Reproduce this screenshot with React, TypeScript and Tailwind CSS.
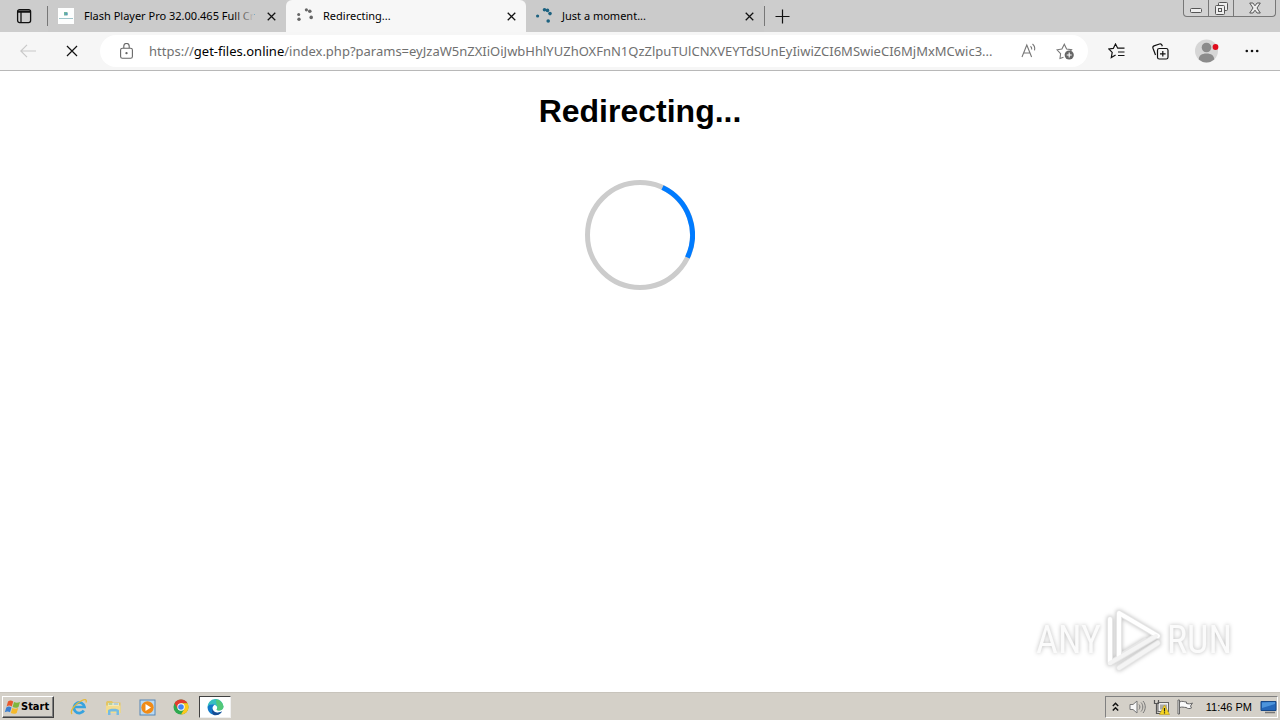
import type { ReactNode } from "react";
import clsx from "clsx";

const URL_REST = "/index.php?params=eyJzaW5nZXIiOiJwbHhlYUZhOXFnN1QzZlpuTUlCNXVEYTdSUnEyIiwiZCI6MSwieCI6MjMxMCwic3...";

function CloseIcon({ size = 9, stroke = 1.4 }: { size?: number; stroke?: number }) {
    return (
        <svg width={size} height={size} viewBox="0 0 10 10" fill="none" stroke="#111" strokeWidth={stroke}>
            <path d="M.8.8 9.2 9.2M9.2.8.8 9.2" />
        </svg>
    );
}

function LoadingDots({ color }: { color: string }) {
    return (
        <svg width="16" height="16" viewBox="0 0 16 16" fill={color}>
            <circle cx="1.6" cy="8" r="1.6" />
            <circle cx="8.5" cy="1.8" r="1.8" />
            <circle cx="11.5" cy="2.4" r="1.8" />
            <circle cx="14" cy="5.6" r="1.8" />
            <circle cx="12.2" cy="13" r="1.8" />
        </svg>
    );
}

function GreyDots() {
    return (
        <svg width="16" height="16" viewBox="0 0 16 16" fill="#666">
            <circle cx="1.7" cy="6.4" r="1.5" />
            <circle cx="2" cy="11.2" r="1.7" />
            <circle cx="9.4" cy="1.8" r="1.6" />
            <circle cx="12.8" cy="3.2" r="1.8" />
            <circle cx="14.2" cy="9.4" r="1.8" />
        </svg>
    );
}

function SiteIcon() {
    return (
        <svg width="16" height="16" viewBox="0 0 16 16">
            <path d="M0 0h16v16H0z" fill="#fdfefe" />
            <path d="M6 4h3.500v3.500H6z" fill="#6fb7a0" />
            <path d="M7.500 5h2v2h-2z" fill="#5a9bbd" />
            <path d="M1 10h14v1H1z" fill="#9fc5cb" />
        </svg>
    );
}

type TabProps = { title: string; icon: ReactNode; active?: boolean; fade?: boolean; className: string };

function Tab({ title, icon, active, fade, className }: TabProps) {
    return (
        <div className={clsx("flex h-8 items-center pr-2.5", active ? "rounded-t-md bg-[#f7f7f7]" : "bg-[#cbcbcb]", className)}>
            <button type="button" role="tab" aria-selected={!!active} className="flex min-w-0 flex-1 items-center gap-2.5">
                <span className="shrink-0">{icon}</span>
                <span className="relative text-left text-[11px] leading-4 whitespace-nowrap">
                    {title}
                    {fade && <span className="absolute inset-y-0 right-0 w-5 bg-linear-to-r from-transparent to-[#cbcbcb]" />}
                </span>
            </button>
            <button type="button" aria-label={`Close ${title}`} className="ml-2 shrink-0">
                <CloseIcon />
            </button>
        </div>
    );
}

function WindowControls() {
    return (
        <div className="flex h-[17px] self-start rounded-b-[4px] border border-t-0 border-[#777] bg-[#d2d2d2]">
            <button type="button" aria-label="Minimize" className="flex w-[25px] items-center justify-center border-r border-[#777]">
                <svg width="12" height="12" viewBox="0 0 12 12" fill="#eee" stroke="#555">
                    <rect x=".5" y="6.500" width="11" height="4" rx="1" />
                </svg>
            </button>
            <button type="button" aria-label="Restore" className="flex w-[25px] items-center justify-center border-r border-[#777]">
                <svg width="13" height="13" viewBox="0 0 13 13" fill="#eee" stroke="#555">
                    <rect x="3.500" y=".5" width="9" height="8" rx="1" />
                    <rect x=".5" y="3.500" width="9" height="9" rx="1" />
                    <rect x="3.500" y="6.500" width="3" height="3" />
                </svg>
            </button>
            <button type="button" aria-label="Close window" className="flex w-[41px] items-center justify-center">
                <svg width="12" height="12" viewBox="0 0 12 12" fill="#eee" stroke="#555">
                    <path d="M.7 1h3.200L6 3.800 8.100 1h3.200L8 6l3.300 5H8.100L6 8.200 3.900 11H.7L4 6z" />
                </svg>
            </button>
        </div>
    );
}

function TabStrip() {
    return (
        <header className="flex h-8 items-center bg-[#cdcdcd]">
            <button type="button" aria-label="Tab actions" className="ml-4 flex w-[31px] items-center">
                <svg width="16" height="16" viewBox="0 0 16 16" fill="none" stroke="#111" strokeWidth="1.300">
                    <rect x="1.600" y="1.600" width="13" height="13" rx="2" />
                    <path d="M1.600 3.200h13M1.600 4.200h13M5 4v10.500" />
                </svg>
            </button>
            <span className="h-5 w-px bg-[#777]" />
            <div role="tablist" className="flex min-w-0">
                <Tab title="Flash Player Pro 32.00.465 Full Cr" icon={<SiteIcon />} fade className="w-[238px] pl-2.5" />
                <Tab title="Redirecting..." icon={<GreyDots />} active className="w-60 pl-[11px]" />
                <Tab title="Just a moment..." icon={<LoadingDots color="#1d6280" />} className="w-[238px] pl-2.5" />
            </div>
            <span className="h-5 w-px bg-[#777]" />
            <button type="button" aria-label="New tab" className="ml-2.5">
                <svg width="15" height="15" viewBox="0 0 15 15" stroke="#111" strokeWidth="1.200">
                    <path d="M7.500.5v14M.5 7.500h14" />
                </svg>
            </button>
            <div className="mr-1 ml-auto self-start">
                <WindowControls />
            </div>
        </header>
    );
}

function Toolbar() {
    return (
        <nav className="flex h-[39px] items-center border-b border-[#b8b8b8] bg-[#f6f6f6]">
            <button type="button" aria-label="Back" disabled className="ml-5">
                <svg width="16" height="14" viewBox="0 0 16 14" fill="none" stroke="#c8c8c8" strokeWidth="1.200">
                    <path d="M7 .8.8 7 7 13.200M.8 7H16" />
                </svg>
            </button>
            <button type="button" aria-label="Stop loading" className="ml-[30px]">
                <CloseIcon size={12} stroke={1} />
            </button>
            <div className="ml-[22px] flex h-8 min-w-0 flex-1 items-center rounded-full bg-white pr-3.5 pl-5">
                <svg width="13" height="16" viewBox="0 0 13 16" fill="none" stroke="#666" strokeWidth="1.100" className="shrink-0">
                    <rect x=".6" y="5.200" width="11.800" height="10" rx="1.800" />
                    <path d="M3.800 5V3.200a2.700 2.700 0 0 1 5.400 0V5" />
                    <circle cx="6.500" cy="10.200" r=".6" fill="#666" />
                </svg>
                <p className="ml-4 min-w-0 flex-1 overflow-hidden text-[13px] leading-5 whitespace-nowrap text-[#707070]">
                    https://<span className="text-black">get-files.online</span>{URL_REST}
                </p>
                <button type="button" aria-label="Read aloud" className="shrink-0">
                    <svg width="17" height="16" viewBox="0 0 17 16" fill="none" stroke="#777" strokeWidth="1.100">
                        <path d="m1 14 4.800-12L10.600 14M2.600 10h6.400" />
                        <path d="M9.500 3.200c1 .8 1.400 2 1.200 3.300M11.500 1c2 1.600 2.600 3.800 2 6.400" />
                    </svg>
                </button>
                <button type="button" aria-label="Add to favorites" className="ml-[18px] shrink-0">
                    <svg width="18" height="18" viewBox="0 0 18 18" fill="none" stroke="#777" strokeWidth="1.100">
                        <path d="M7.500 15.200 4 16.500l.6-4.800L1 7.800l4.900-.8L8.300 2.300 10.600 7l5 .6-1.300 1.500" />
                        <circle cx="13.200" cy="13" r="4.600" fill="#666" stroke="none" />
                        <path d="M10.700 13h5M13.200 10.500v5" stroke="#fff" />
                    </svg>
                </button>
            </div>
            <button type="button" aria-label="Favorites" className="ml-5">
                <svg width="17" height="16" viewBox="0 0 17 16" fill="none" stroke="#111" strokeWidth="1.200">
                    <path d="M16.500 5.200H9.700L7.500 1 5.300 5.400.8 6l3.400 3.400-.9 5.100L7.600 12M10 9h6.500M10 12.500h6.500" />
                </svg>
            </button>
            <button type="button" aria-label="Collections" className="ml-[27px]">
                <svg width="17" height="17" viewBox="0 0 17 17" fill="none" stroke="#111" strokeWidth="1.200">
                    <path d="M3.500 12 1 5.200C.6 4 1 3.300 2 2.900L7.500 1c1.200-.4 2 0 2.400 1l.4 1.200" />
                    <rect x="5.500" y="5.500" width="10.500" height="10.500" rx="1.800" />
                    <path d="M8 10.800h5.600M10.800 8v5.600" />
                </svg>
            </button>
            <button type="button" aria-label="Profile" className="ml-[26px]">
                <svg width="24" height="24" viewBox="0 0 24 24">
                    <circle cx="11.500" cy="12" r="11.500" fill="#d6d6d6" />
                    <circle cx="11.500" cy="8.500" r="4.800" fill="#8b8b8b" />
                    <path d="M3.800 20.500c0-4 3-6 7.700-6s7.700 2 7.700 6a11.500 11.500 0 0 1-15.400 0z" fill="#8b8b8b" />
                    <circle cx="20.500" cy="8" r="2.900" fill="#e00b1c" />
                </svg>
            </button>
            <button type="button" aria-label="Settings and more" className="mr-[21px] ml-[26px]">
                <svg width="14" height="4" viewBox="0 0 14 4" fill="#111">
                    <circle cx="1.800" cy="2" r="1.300" />
                    <circle cx="7" cy="2" r="1.300" />
                    <circle cx="12.200" cy="2" r="1.300" />
                </svg>
            </button>
        </nav>
    );
}

function Watermark() {
    return (
        <div className="absolute right-12 bottom-5 flex items-center gap-1 font-['Roboto_Condensed','Open_Sans_Condensed',Roboto,sans-serif] text-[38px] leading-none text-[#fbfbfb] drop-shadow-[0_0_2px_#bbb]">
            <span>ANY</span>
            <svg width="58" height="64" viewBox="0 0 58 64" fill="none" strokeLinejoin="round" strokeLinecap="round">
                <path d="M14 5v44M14 5l39 23M5 11v44l7-4 39-23M14 60l39-25M14 49l26-16" stroke="#e6e6e6" strokeWidth="6" />
                <path d="M14 49V5l39 23M5 55V11" stroke="#fff" strokeWidth="4" />
                <path d="M5 55l7-4 39-23M14 60l39-25" stroke="#f4f4f4" strokeWidth="4" />
            </svg>
            <span>RUN</span>
        </div>
    );
}

function WindowsFlag() {
    return (
        <svg width="17" height="17" viewBox="0 0 17 17">
            <path d="M4 2.500c2-1.400 3.500-1 5.200 0L7.800 7.400C6 6.400 4.500 6.300 2.600 7.400z" fill="#e8582b" />
            <path d="M10 3c2 1 3.600 1 6 0l-1.500 5c-2 1.200-4 1-5.900 0z" fill="#7fb63c" />
            <path d="M2.300 8.400c1.900-1.200 3.500-1 5.200 0L6 13.300c-1.600-1-3.300-1-5.200 0z" fill="#3b7fd0" />
            <path d="M8.300 9c2 1 3.700 1.100 5.900 0l-1.500 4.900c-2 1.200-3.800 1-5.900 0z" fill="#f5b92b" />
        </svg>
    );
}

function ExplorerE() {
    return (
        <svg width="18" height="18" viewBox="0 0 18 18" fill="none">
            <path d="M13.800 12.500A5.300 5.300 0 1 1 14.500 9H5" stroke="#36a3df" strokeWidth="2.700" />
            <path d="M2 16C-.5 13 5 6 11 3c4-2 6-2 5 1.500" stroke="#e5b938" strokeWidth="1.300" />
        </svg>
    );
}

function FolderIcon() {
    return (
        <svg width="17" height="17" viewBox="0 0 17 17">
            <path d="M1 3.500 2 2h5l1 1.500h7.500V14H1z" fill="#e3c565" />
            <path d="M3 4h11v5H3z" fill="#f7f5da" />
            <path d="M3.500 5h4" stroke="#73ab65" />
            <path d="M8.500 5h5" stroke="#6fa8d6" />
            <path d="M1 6.500h14.500V14H1z" fill="#f3dc8e" />
            <path d="M3 16v-4.500C3 9 14 9 14 11.500V16h-2.500v-3.500h-6V16z" fill="#74bbe3" />
        </svg>
    );
}

function MediaIcon() {
    return (
        <svg width="17" height="17" viewBox="0 0 17 17">
            <rect x="1" y="1" width="15" height="15" fill="#b9d9f3" stroke="#5686b5" />
            <circle cx="8.500" cy="8.500" r="6.200" fill="#f18b17" />
            <path d="m6.500 5 5.500 3.500L6.500 12z" fill="#fff" />
        </svg>
    );
}

function ChromeIcon() {
    return (
        <svg width="16" height="16" viewBox="0 0 16 16">
            <circle cx="8" cy="8" r="7.500" fill="#2da94f" />
            <path d="M1.500 4.250A7.500 7.500 0 0 1 14.500 4.250H8L4.750 9.900z" fill="#e33b2e" />
            <path d="M14.500 4.250A7.500 7.500 0 0 1 8 15.500l3.250-5.600L8 4.250z" fill="#fdc81c" />
            <circle cx="8" cy="8" r="3.700" fill="#fff" />
            <circle cx="8" cy="8" r="2.800" fill="#4285f4" />
        </svg>
    );
}

function EdgeIcon() {
    return (
        <svg width="17" height="17" viewBox="0 0 17 17">
            <path d="M.5 8.500A8 8 0 0 1 16.500 7.500c0 2.800-2.200 4-4.500 4-2 0-2.800-.8-2-1.700C11 7.500 8.500 5.500 5.500 5.600 3 5.800 1 7 .5 8.500z" fill="#37bfc0" />
            <path d="M9 .6a8 8 0 0 1 7.500 6.900c0 2.800-2.200 4-4.500 4-2 0-2.800-.8-2-1.700 1-1.800.5-3.200-.5-4.300z" fill="#53c878" />
            <path d="M.5 8.500C1 5.500 5 4.500 8 5.700 6 6.500 5.200 8.300 5.700 10.200c.8 3.300 4.800 4.600 9.300 2.400A8 8 0 0 1 .5 8.500z" fill="#1279c9" />
            <path d="M5.700 10.200c.8 3.300 4.800 4.600 9.300 2.400-2 3.200-4.800 4-7.500 3.700C4.500 15 4.800 12 5.700 10.200z" fill="#174d94" />
        </svg>
    );
}

const pinned = [
    { label: "Internet Explorer", icon: <ExplorerE /> },
    { label: "Windows Explorer", icon: <FolderIcon /> },
    { label: "Media Player", icon: <MediaIcon /> },
    { label: "Google Chrome", icon: <ChromeIcon /> },
    { label: "Microsoft Edge", icon: <EdgeIcon />, active: true },
];

function Tray() {
    return (
        <div className="mr-0.5 ml-auto flex h-[22px] items-center border border-t-[#808080] border-r-white border-b-white border-l-[#808080] pl-1.5">
            <button type="button" aria-label="Show hidden icons">
                <svg width="7" height="10" viewBox="0 0 7 10" fill="none" stroke="#111" strokeWidth="1.500">
                    <path d="m.8 4 2.700-2.700L6.200 4M.8 8.500l2.700-2.700 2.700 2.700" />
                </svg>
            </button>
            <svg width="17" height="16" viewBox="0 0 17 16" fill="#f7f7f7" stroke="#777" className="ml-2.5">
                <path d="M1 5.500h3L8 2v12l-4-3.500H1z" />
                <path d="M10 5.500c1.200 1.500 1.200 3.500 0 5M12 3.500c2.400 2.500 2.400 6.500 0 9M14 2c3 3.500 3 8.500 0 12" fill="none" />
            </svg>
            <svg width="17" height="16" viewBox="0 0 17 16" className="ml-[7px]">
                <rect x="5" y="3.500" width="10.500" height="9" fill="#eee" stroke="#666" />
                <path d="M7 5.500h7v5H7z" fill="#aaa" />
                <path d="M1.500 1v3.500h4V1M3.500 4.500V14.500h4" fill="none" stroke="#555" strokeWidth="1.200" />
                <path d="m11.500 6 5 9.500h-10z" fill="#f6d51f" stroke="#b8981b" strokeWidth=".6" />
                <path d="M11.500 9v3.500M11.500 13.300v1.200" stroke="#222" strokeWidth="1.200" />
            </svg>
            <svg width="17" height="16" viewBox="0 0 17 16" fill="#fafafa" stroke="#666" className="ml-[7px]">
                <path d="M2.500 3c3-1.500 4.500 0 7 0v1.500c2 .5 4 .5 6-.5l-2 3 1 2c-2 1-3.500.5-5 0V8.500c-3 0-4-1-7 0z" />
                <path d="M1 1h1.500v14H1z" />
            </svg>
            <time className="ml-3 font-['Liberation_Sans',sans-serif] text-[11px]">11:46 PM</time>
            <button type="button" aria-label="Show desktop" className="ml-2">
                <svg width="17" height="16" viewBox="0 0 17 16">
                    <path d="M1 2.500h15v9H1z" fill="#2467b9" stroke="#174887" />
                    <path d="m2 3.500 13-.5v2L2 9z" fill="#4c94dc" />
                    <path d="M5 13.500h10" stroke="#777" strokeWidth="1.500" />
                </svg>
            </button>
        </div>
    );
}

function Taskbar() {
    return (
        <footer className="flex h-7 items-center border-t border-[#c8c4bc] bg-[#d4d0c8] pt-px">
            <button type="button" className="ml-0.5 flex h-[22px] w-[52px] items-center border border-t-white border-r-[#404040] border-b-[#404040] border-l-white pl-px font-['DejaVu_Sans_Condensed','Liberation_Sans',sans-serif] text-[11px] font-bold shadow-[inset_-1px_-1px_0_#808080]">
                <WindowsFlag />
                Start
            </button>
            <div className="ml-[9px] flex items-center gap-0.5">
                {pinned.map(({ label, icon, active }) => (
                    <button
                        key={label}
                        type="button"
                        aria-label={label}
                        className={clsx(
                            "flex h-[22px] w-8 items-center justify-center",
                            active && "border border-t-[#404040] border-r-[#f0f0f0] border-b-[#f0f0f0] border-l-[#404040] bg-white"
                        )}
                    >
                        {icon}
                    </button>
                ))}
            </div>
            <Tray />
        </footer>
    );
}

export default function App() {
    return (
        <div className="flex min-h-screen flex-col bg-white font-['Noto_Sans','Open_Sans',sans-serif] text-black">
            <TabStrip />
            <Toolbar />
            <main className="relative flex flex-1 flex-col items-center pt-5">
                <h1 className="font-['Liberation_Sans',Arial,sans-serif] text-[32px] leading-10 font-bold">Redirecting...</h1>
                <svg width="110" height="110" viewBox="0 0 110 110" fill="none" strokeWidth="5" className="mt-[49px]" role="img" aria-label="Loading">
                    <circle cx="55" cy="55" r="52.500" stroke="#ccc" />
                    <path d="M77.500 7.600A52.500 52.500 0 0 1 102.400 77.500" stroke="#007bff" />
                </svg>
                <Watermark />
            </main>
            <Taskbar />
        </div>
    );
}
